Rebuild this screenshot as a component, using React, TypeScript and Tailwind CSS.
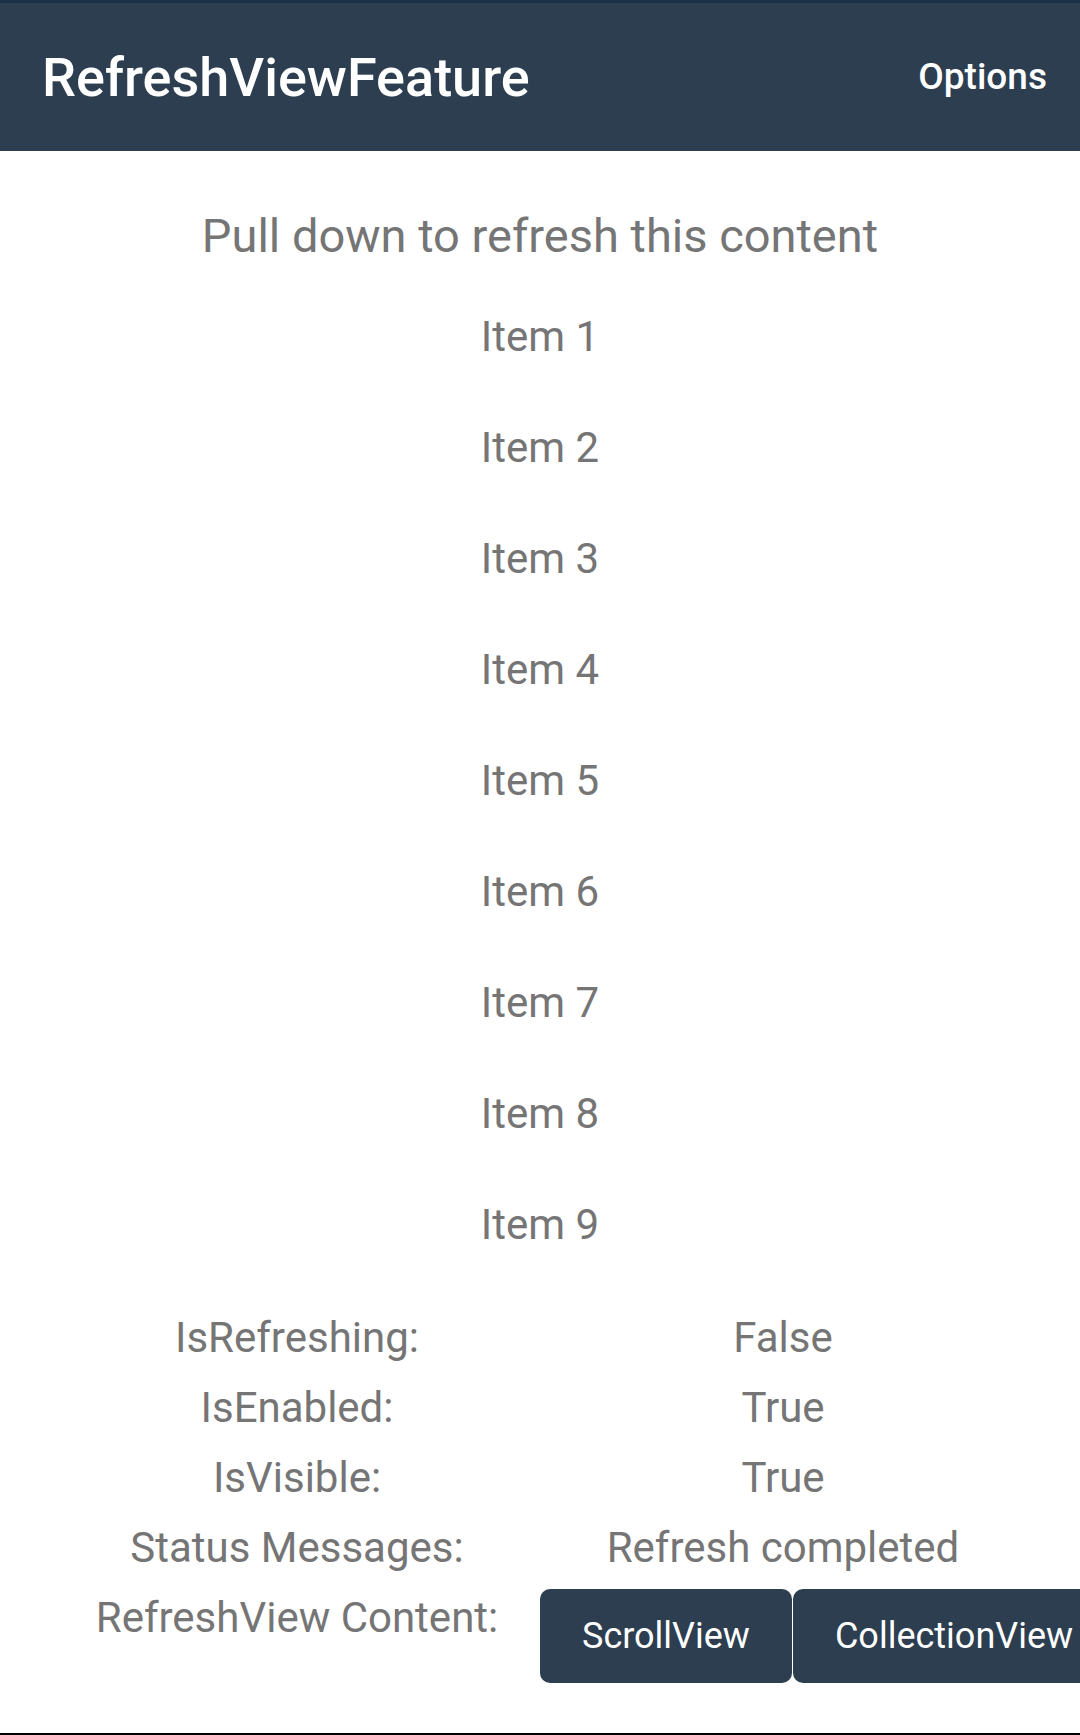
import * as React from "react";

const items = ["Item 1", "Item 2", "Item 3", "Item 4", "Item 5", "Item 6", "Item 7", "Item 8", "Item 9"];

const stats = [
  { label: "IsRefreshing:", value: "False" },
  { label: "IsEnabled:", value: "True" },
  { label: "IsVisible:", value: "True" },
  { label: "Status Messages:", value: "Refresh completed" },
];

export default function App() {
  return (
    <div className="flex flex-col w-[1080px] h-[1735px] overflow-hidden bg-white font-['Roboto',sans-serif]">
      {/* Toolbar */}
      <header className="flex items-center justify-between h-[151px] pl-[42px] pr-[33px] bg-[#2c3e50] border-t-[3px] border-[#1c3048]">
        <h1 className="text-[54px] font-medium text-white">RefreshViewFeature</h1>
        <span className="text-[37px] font-medium text-white">Options</span>
      </header>

      <main className="flex-1 text-[#757575]">
        <p className="mt-[57px] text-center text-[47px] leading-[56px]">
          Pull down to refresh this content
        </p>

        {/* Items */}
        <div className="flex flex-col mt-[17px]">
          {items.map((item) => (
            <div key={item} className="flex items-center justify-center h-[111px] text-[42px]">
              {item}
            </div>
          ))}
        </div>

        {/* Status grid */}
        <div className="grid grid-cols-2 mt-[22px] px-[54px] text-[42px]">
          {stats.map((s) => (
            <React.Fragment key={s.label}>
              <div className="flex items-center justify-center h-[70px]">{s.label}</div>
              <div className="flex items-center justify-center h-[70px]">{s.value}</div>
            </React.Fragment>
          ))}
          <div className="flex items-center justify-center h-[70px]">RefreshView Content:</div>
          <div className="flex gap-[1px] pt-[7px]">
            <button className="shrink-0 h-[94px] px-[42px] rounded-[10px] bg-[#2c3e50] text-white text-[36px]">
              ScrollView
            </button>
            <button className="shrink-0 h-[94px] pl-[42px] pr-[40px] rounded-[10px] bg-[#2c3e50] text-white text-[36px]">
              CollectionView
            </button>
          </div>
        </div>
      </main>

      <div className="h-[2px] bg-black" />
    </div>
  );
}
